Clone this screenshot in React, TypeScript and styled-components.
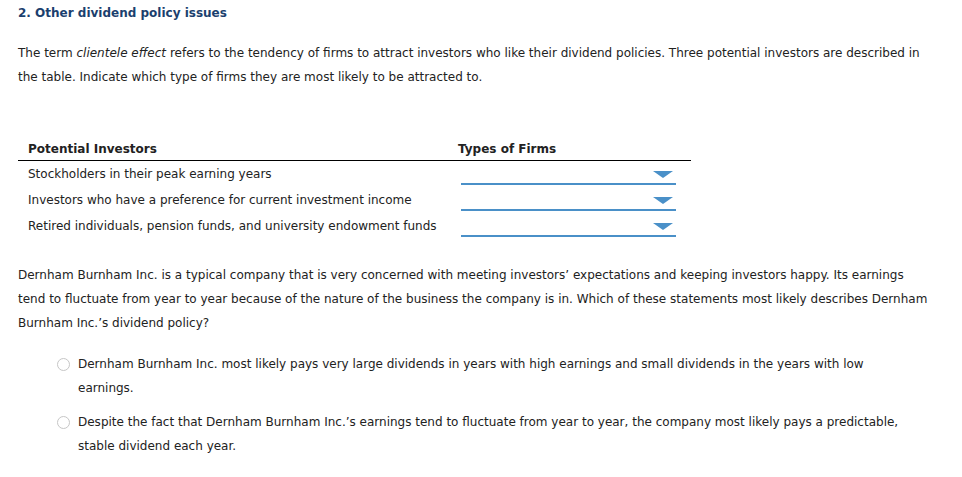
import React from "react";
import styled, { createGlobalStyle } from "styled-components";

const Global = createGlobalStyle`
  html, body { margin: 0; padding: 0; background: #fff; }
  body { font-family: "DejaVu Sans", Verdana, sans-serif; color: #222; }
`;

const Page = styled.div`
  width: 914px;
  padding: 1px 18px 0;
  font-size: 12px;
  line-height: 24px;
`;

const Heading = styled.h2`
  margin: 0 0 16px 0;
  font-size: 12px;
  line-height: 24px;
  font-weight: bold;
  color: #1b3f6e;
`;

const Para = styled.p<{ $mb: number }>`
  margin: 0 0 ${(p) => p.$mb}px 0;
  font-size: 12px;
  line-height: 24px;
`;

const Table = styled.div`
  width: 673px;
  margin-bottom: 24px;
`;

const HeaderRow = styled.div`
  display: grid;
  grid-template-columns: 430px 1fr;
  height: 24px;
  line-height: 24px;
  border-bottom: 1px solid #000;
  font-weight: bold;
  box-sizing: border-box;
  padding-left: 10px;
`;

const Row = styled.div`
  display: grid;
  grid-template-columns: 433px 215px;
  height: 26px;
  line-height: 26px;
  padding-left: 10px;
  align-items: start;
`;

const HeaderCell = styled.div``;

const Cell = styled.div`
  white-space: nowrap;
`;

const Select = styled.div`
  height: 22px;
  border-bottom: 2px solid #4a90c8;
  position: relative;
`;

const Arrow = styled.span`
  position: absolute;
  right: 3px;
  top: 10px;
  width: 0;
  height: 0;
  border-left: 10px solid transparent;
  border-right: 10px solid transparent;
  border-top: 7px solid #4a90c8;
`;

const Options = styled.div`
  display: flex;
  flex-direction: column;
  gap: 10px;
  padding: 0 20px 0 39px;
`;

const Option = styled.label`
  display: grid;
  grid-template-columns: 21px 1fr;
  font-size: 12px;
  line-height: 24px;
`;

const Radio = styled.span`
  width: 11px;
  height: 11px;
  border: 1px solid #c6c6c6;
  border-radius: 50%;
  margin-top: 6px;
  background: #fff;
`;

const rows = [
  "Stockholders in their peak earning years",
  "Investors who have a preference for current investment income",
  "Retired individuals, pension funds, and university endowment funds",
];

export default function App() {
  return (
    <Page>
      <Global />
      <Heading>2. Other dividend policy issues</Heading>
      <Para $mb={48}>
        The term <i>clientele effect</i> refers to the tendency of firms to attract investors who like their dividend
        policies. Three potential investors are described in the table. Indicate which type of firms they are most
        likely to be attracted to.
      </Para>
      <Table>
        <HeaderRow>
          <HeaderCell>Potential Investors</HeaderCell>
          <HeaderCell>Types of Firms</HeaderCell>
        </HeaderRow>
        {rows.map((r) => (
          <Row key={r}>
            <Cell>{r}</Cell>
            <Select>
              <Arrow />
            </Select>
          </Row>
        ))}
      </Table>
      <Para $mb={17}>
        Dernham Burnham Inc. is a typical company that is very concerned with meeting investors’ expectations and
        keeping investors happy. Its earnings tend to fluctuate from year to year because of the nature of the business
        the company is in. Which of these statements most likely describes Dernham Burnham Inc.’s dividend policy?
      </Para>
      <Options>
        <Option>
          <Radio />
          <span>
            Dernham Burnham Inc. most likely pays very large dividends in years with high earnings and small dividends
            in the years with low earnings.
          </span>
        </Option>
        <Option>
          <Radio />
          <span>
            Despite the fact that Dernham Burnham Inc.’s earnings tend to fluctuate from year to year, the company most
            likely pays a predictable, stable dividend each year.
          </span>
        </Option>
      </Options>
    </Page>
  );
}
